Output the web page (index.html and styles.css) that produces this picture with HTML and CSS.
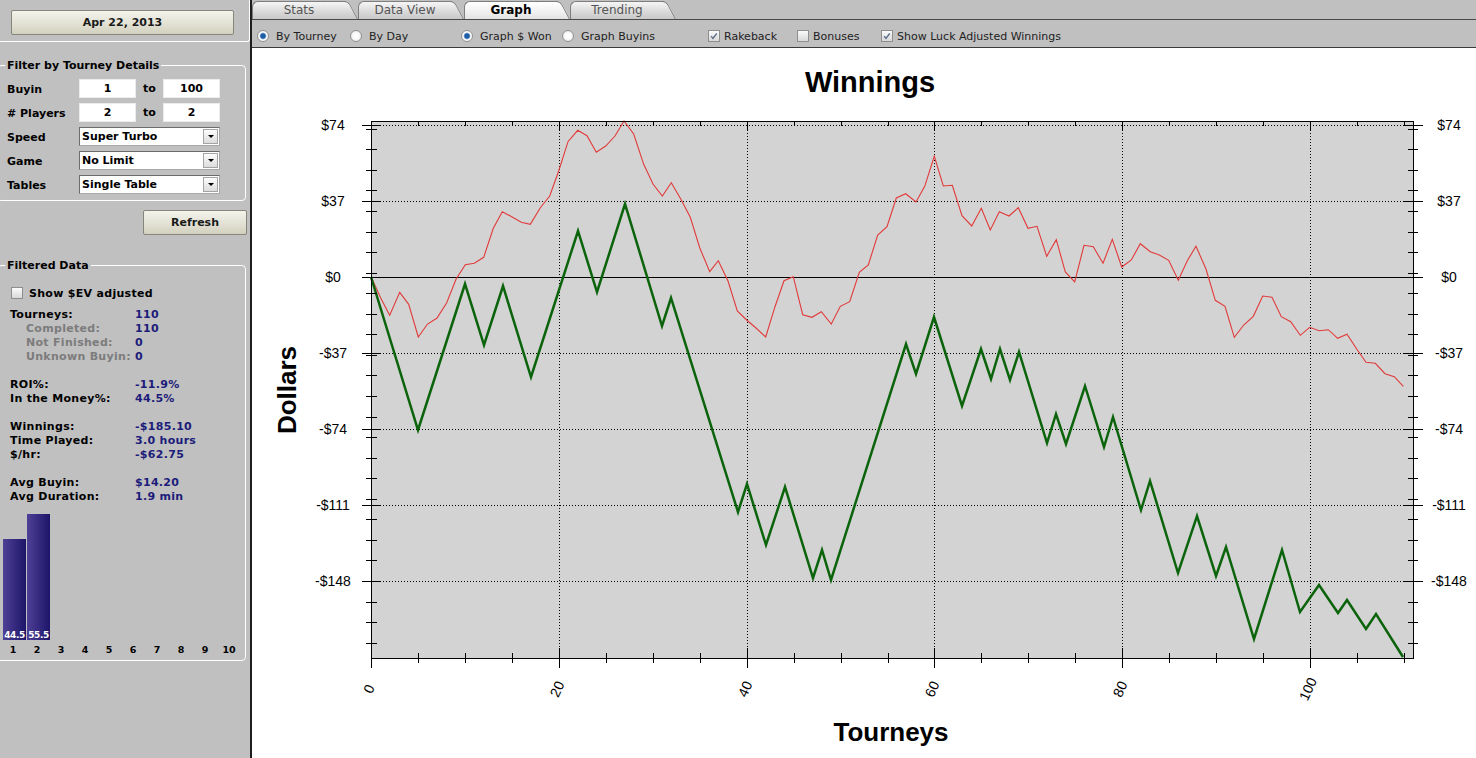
FILE: index.html
```html
<!DOCTYPE html>
<html lang="en">
<head>
  <meta charset="UTF-8" />
  <title>Tourney Graph</title>
  <link rel="stylesheet" href="styles.css">
</head>
<body>
  <aside class="sidebar">
    <div class="date-box">
      <button class="btn date-btn">Apr 22, 2013</button>
    </div>

    <fieldset class="group filter">
      <legend>Filter by Tourney Details</legend>
      <div class="row">
        <label>Buyin</label>
        <input class="num" type="text" value="1" readonly><span class="to">to</span><input class="num" type="text" value="100" readonly>
      </div>
      <div class="row">
        <label># Players</label>
        <input class="num" type="text" value="2" readonly><span class="to">to</span><input class="num" type="text" value="2" readonly>
      </div>
      <div class="row">
        <label>Speed</label>
        <div class="select">Super Turbo<span class="drop"></span></div>
      </div>
      <div class="row">
        <label>Game</label>
        <div class="select">No Limit<span class="drop"></span></div>
      </div>
      <div class="row">
        <label>Tables</label>
        <div class="select">Single Table<span class="drop"></span></div>
      </div>
    </fieldset>

    <button class="btn refresh">Refresh</button>

    <fieldset class="group data">
      <legend>Filtered Data</legend>
      <div class="ev"><span class="box"></span>Show $EV adjusted</div>
      <div class="stats">
        <span>Tourneys:</span><span class="val">110</span>
        <span class="sub">Completed:</span><span class="val">110</span>
        <span class="sub">Not Finished:</span><span class="val">0</span>
        <span class="sub">Unknown Buyin:</span><span class="val">0</span>
        <span class="gap"></span>
        <span>ROI%:</span><span class="val">-11.9%</span>
        <span>In the Money%:</span><span class="val">44.5%</span>
        <span class="gap"></span>
        <span>Winnings:</span><span class="val">-$185.10</span>
        <span>Time Played:</span><span class="val">3.0 hours</span>
        <span>$/hr:</span><span class="val">-$62.75</span>
        <span class="gap"></span>
        <span>Avg Buyin:</span><span class="val">$14.20</span>
        <span>Avg Duration:</span><span class="val">1.9 min</span>
      </div>
      <div class="bars">
        <div class="bar" style="height:101px"><span>44.5</span></div>
        <div class="bar" style="height:126px"><span>55.5</span></div>
      </div>
      <div class="bar-axis">
        <span>1</span><span>2</span><span>3</span><span>4</span><span>5</span>
        <span>6</span><span>7</span><span>8</span><span>9</span><span>10</span>
      </div>
    </fieldset>
  </aside>

  <main class="content">
    <nav class="tabs">
      <div class="tab"><span>Stats</span></div>
      <div class="tab"><span>Data View</span></div>
      <div class="tab active"><span>Graph</span></div>
      <div class="tab"><span>Trending</span></div>
    </nav>

    <div class="toolbar">
      <label class="opt o1"><span class="radio on"></span>By Tourney</label>
      <label class="opt o2"><span class="radio"></span>By Day</label>
      <label class="opt o3"><span class="radio on"></span>Graph $ Won</label>
      <label class="opt o4"><span class="radio"></span>Graph Buyins</label>
      <label class="opt c1"><span class="box"><svg viewBox="0 0 12 12"><path d="M2.5 6.2l2.2 2.6 4.6-5.8"/></svg></span>Rakeback</label>
      <label class="opt c2"><span class="box"></span>Bonuses</label>
      <label class="opt"><span class="box"><svg viewBox="0 0 12 12"><path d="M2.5 6.2l2.2 2.6 4.6-5.8"/></svg></span>Show Luck Adjusted Winnings</label>
    </div>

    <div class="chart">
      <svg width="1224" height="710" viewBox="252 48 1224 710">
        <text class="title" x="870" y="92">Winnings</text>
        <text class="axis-title" transform="translate(296 390) rotate(-90)">Dollars</text>
        <text class="axis-title" x="891" y="741">Tourneys</text>

        <rect class="plot" x="371.5" y="121.5" width="1042" height="537"/>

        <!-- grid -->
        <path class="grid" d="M371 125.5H1413M371 201.5H1413M371 353.5H1413M371 429.5H1413M371 505.5H1413M371 581.5H1413"/>
        <path class="grid" d="M559.5 121V658M747.5 121V658M934.5 121V658M1122.5 121V658M1310.5 121V658"/>
        <path class="axis" d="M362 277.5H1423"/>

        <!-- luck adjusted -->
        <polyline class="luck" points="371.3,277.3 380.7,298 389.7,315.3 399.7,292.3 408.7,304.3 418.3,337 427.3,324.3 437,318 446.7,302.7 456,279.3 465.3,264.7 474.3,263.3 483.7,257.3 493.3,228.3 502.3,211.7 511.7,216.7 521.3,222.3 530.3,224.3 540.3,207.7 549.7,196 558.7,171 568,141.7 577.7,130.3 587,135.7 596.3,152.3 605.7,146 615,136 624,121 633.7,134 643.7,164.3 653,184 662.3,196 671.3,182.7 681.3,200 690.3,217.3 699.7,247.7 709.7,271.7 718.3,260.7 728,281 737.3,311 746.7,320 756,328 765.7,337 775,306.7 784,280.7 793.3,276.7 802.7,314.7 812,317.3 821.3,311.7 831.3,324 840.3,306.3 849.7,301.7 859.3,272.3 868.3,265 877.7,235 887,226.7 896.3,198 905.7,193.7 916,202 924.7,186.3 934.3,156 943.3,186 952.3,185.3 962,215.7 971.7,226 981.3,208.3 990.3,230 999.3,211.7 1009,216 1018.3,207.7 1028,228.3 1037,226.3 1046.7,256.3 1056.3,239.7 1065.3,272 1074.7,282 1084,245.3 1093.3,246.7 1103,263.3 1112.3,239.3 1121.7,267 1131.3,260 1140.3,243.7 1150.3,251.7 1159.3,255 1168.7,260.3 1178.3,280.3 1187.3,260.7 1196,246.3 1206,269 1215.3,300.3 1225,306.3 1234.3,337.3 1243.7,325 1253.3,316.3 1262.7,296 1272,297.3 1281.3,316.7 1290.7,321.7 1300.3,335.3 1309.7,327.3 1319,330.7 1328.3,329.7 1337.7,338.3 1347,334.3 1356.7,349 1366,362.3 1375.3,363.3 1385,373.7 1394.3,376.7 1403.3,386.3"/>

        <!-- actual winnings -->
        <polyline class="won" points="371,277 418,430 465,284 484,345 503,286 531,377 578,231 597,292 625,204 662,326 671,298 738,512 747,484 766,545 785,487 813,578 822,550 831,580 906,344 916,374 934,317 962,406 981,349 991,379 1000,349 1010,380 1019,352 1047,443 1056,414 1066,444 1085,386 1104,447 1113,417 1141,510 1150,481 1178,573 1197,516 1216,576 1226,547 1254,639 1282,550 1300,612 1319,585 1338,613 1347,600 1366,629 1376,614 1403,657"/>

        <rect class="frame" x="371.5" y="121.5" width="1042" height="537"/>

        <!-- ticks -->
        <path class="axis" d="M362 125.5H381M362 201.5H381M362 353.5H381M362 429.5H381M362 505.5H381M362 581.5H381
          M1404 125.5H1423M1404 201.5H1423M1404 353.5H1423M1404 429.5H1423M1404 505.5H1423M1404 581.5H1423"/>
        <path class="axis" d="M366 129.5H377M366 149.5H377M366 170.5H377M366 190.5H377M366 211.5H377M366 232.5H377M366 252.5H377M366 273.5H377M366 293.5H377M366 314.5H377M366 334.5H377M366 355.5H377M366 375.5H377M366 396.5H377M366 417.5H377M366 437.5H377M366 458.5H377M366 478.5H377M366 499.5H377M366 519.5H377M366 540.5H377M366 560.5H377M366 602.5H377M366 622.5H377M366 643.5H377
          M1408 129.5H1418M1408 149.5H1418M1408 170.5H1418M1408 190.5H1418M1408 211.5H1418M1408 232.5H1418M1408 252.5H1418M1408 273.5H1418M1408 293.5H1418M1408 314.5H1418M1408 334.5H1418M1408 355.5H1418M1408 375.5H1418M1408 396.5H1418M1408 417.5H1418M1408 437.5H1418M1408 458.5H1418M1408 478.5H1418M1408 499.5H1418M1408 519.5H1418M1408 540.5H1418M1408 560.5H1418M1408 602.5H1418M1408 622.5H1418M1408 643.5H1418"/>
        <path class="axis" d="M371.5 658V668M418.5 653V663M465.5 653V663M512.5 653V663M559.5 648V668M606.5 653V663M653.5 653V663M700.5 653V663M747.5 648V668M794.5 653V663M841.5 653V663M888.5 653V663M934.5 648V668M981.5 653V663M1028.5 653V663M1075.5 653V663M1122.5 648V668M1169.5 653V663M1216.5 653V663M1263.5 653V663M1310.5 648V668M1357.5 653V663M1404.5 653V663
          M418.5 121V126M465.5 121V126M512.5 121V126M559.5 121V131M606.5 121V126M653.5 121V126M700.5 121V126M747.5 121V131M794.5 121V126M841.5 121V126M888.5 121V126M934.5 121V131M981.5 121V126M1028.5 121V126M1075.5 121V126M1122.5 121V131M1169.5 121V126M1216.5 121V126M1263.5 121V126M1310.5 121V131M1357.5 121V126M1404.5 121V126"/>

        <!-- labels -->
        <g class="tick-label">
          <text x="333" y="130">$74</text>
          <text x="333" y="206">$37</text>
          <text x="333" y="282">$0</text>
          <text x="333" y="358">-$37</text>
          <text x="333" y="434">-$74</text>
          <text x="333" y="510">-$111</text>
          <text x="333" y="586">-$148</text>
          <text x="1449" y="130">$74</text>
          <text x="1449" y="206">$37</text>
          <text x="1449" y="282">$0</text>
          <text x="1449" y="358">-$37</text>
          <text x="1449" y="434">-$74</text>
          <text x="1449" y="510">-$111</text>
          <text x="1449" y="586">-$148</text>
          <text transform="translate(369 689) rotate(-65)" dy=".35em">0</text>
          <text transform="translate(557 689) rotate(-65)" dy=".35em">20</text>
          <text transform="translate(745 689) rotate(-65)" dy=".35em">40</text>
          <text transform="translate(932 689) rotate(-65)" dy=".35em">60</text>
          <text transform="translate(1120 689) rotate(-65)" dy=".35em">80</text>
          <text transform="translate(1308 689) rotate(-65)" dy=".35em">100</text>
        </g>
      </svg>
    </div>
  </main>
</body>
</html>
```

FILE: styles.css
```css
body {
  margin: 0;
  height: 100vh;
  display: flex;
  overflow: hidden;
  font-family: "DejaVu Sans", Verdana, sans-serif;
  font-size: 11px;
  background: #c0c0c0;
  color: #000;
}

/* left panel */
.sidebar {
  width: 250px;
  flex: none;
  font-weight: bold;
}
.date-box {
  box-sizing: border-box;
  width: 250px;
  height: 42px;
  padding: 10px 0 0 11px;
  border-right: 1px solid #fff;
  border-bottom: 1px solid #fff;
  border-bottom-right-radius: 3px;
}
.btn {
  display: block;
  height: 25px;
  padding: 0;
  font: bold 11px "DejaVu Sans", Verdana, sans-serif;
  color: #1a1a1a;
  background: linear-gradient(#f4f3ec, #e4e3d6 50%, #d2d1bf);
  border: 1px solid #86867a;
  border-radius: 2px;
}
.date-btn {
  width: 223px;
}
.refresh {
  width: 104px;
  margin: 9px 0 0 143px;
}
.group {
  min-width: 0;
  margin: 17px 4px 0 -3px;
  padding: 7px 0 6px 9px;
  border: 1px solid #fff;
  border-radius: 4px;
}
.group legend {
  padding: 0 2px;
  margin-left: -2px;
  line-height: 13px;
}
.data {
  margin-top: 24px;
  padding: 14px 0 4px 9px;
}
.row {
  display: flex;
  align-items: center;
  height: 19px;
}
.row + .row {
  margin-top: 5px;
}
.row label {
  width: 72px;
  flex: none;
  padding-top: 1px;
}
.num {
  box-sizing: border-box;
  width: 57px;
  height: 19px;
  padding: 0;
  border: 1px solid #ececec;
  background: #fff;
  text-align: center;
  font: bold 11px "DejaVu Sans", Verdana, sans-serif;
  color: #000;
}
.to {
  width: 27px;
  text-align: center;
}
.select {
  box-sizing: border-box;
  width: 141px;
  height: 19px;
  padding: 0 1px 0 2px;
  display: flex;
  align-items: center;
  justify-content: space-between;
  border: 1px solid #6c6c6c;
  border-right-color: #a8a8a8;
  border-bottom-color: #a8a8a8;
  background: #fff;
}
.drop {
  box-sizing: border-box;
  width: 15px;
  height: 15px;
  display: flex;
  align-items: center;
  justify-content: center;
  border: 1px solid #a4a4a4;
  background: linear-gradient(#fdfdfd, #dcdcdc);
}
.drop::after {
  content: "";
  border-left: 3px solid transparent;
  border-right: 3px solid transparent;
  border-top: 3px solid #000;
}

.ev {
  display: flex;
  align-items: center;
  height: 14px;
  padding-left: 4px;
  letter-spacing: .3px;
}
.ev .box {
  margin-right: 6px;
}
.stats {
  display: grid;
  grid-template-columns: 125px auto;
  line-height: 14px;
  margin-top: 8px;
  padding-left: 3px;
  letter-spacing: .3px;
}
.stats .gap {
  grid-column: 1 / -1;
  height: 14px;
}
.stats .sub {
  color: #7c7c7c;
  padding-left: 16px;
}
.stats .val {
  color: #1c1c7a;
}
.bars {
  display: flex;
  align-items: flex-end;
  gap: 1px;
  height: 136px;
  margin-left: -4px;
}
.bar {
  width: 23px;
  display: flex;
  align-items: flex-end;
  justify-content: center;
  background: linear-gradient(90deg, #4e4096, #1d1569);
  color: #fff;
  font-size: 9px;
  line-height: 10px;
  letter-spacing: -.4px;
}
.bar-axis {
  display: flex;
  margin: 4px 0 0 -6px;
  font-size: 9.5px;
  line-height: 12px;
}
.bar-axis span {
  width: 24px;
  text-align: center;
}

/* right panel */
.content {
  flex: 1;
  display: flex;
  flex-direction: column;
  border-left: 2px solid #1e1e1e;
  overflow: hidden;
}
.tabs {
  height: 19px;
  display: flex;
  align-items: flex-end;
  border-bottom: 1px solid #4a4a4a;
}
.tab {
  position: relative;
  isolation: isolate;
  width: 106px;
  height: 18px;
  flex: none;
  font-size: 12px;
  line-height: 18px;
  color: #555;
}
.tab::before,
.tab::after {
  content: "";
  position: absolute;
  z-index: -1;
  top: 0;
  bottom: 0;
  background: linear-gradient(#f6f6f6, #dadada 55%, #c8c8c8);
  border-top: 1px solid #7e7e7e;
}
.tab::before {
  left: 0;
  right: 12px;
  border-left: 1px solid #7e7e7e;
  border-top-left-radius: 6px;
}
.tab::after {
  right: 0;
  width: 24px;
  border-right: 1px solid #7e7e7e;
  border-top-right-radius: 5px;
  transform: skewX(28deg);
  transform-origin: bottom right;
}
.tab.active {
  font-weight: bold;
  color: #000;
}
.tab.active::before,
.tab.active::after {
  background: linear-gradient(#ffffff, #f0f0f0 60%, #e2e2e2);
}
.tab span {
  display: block;
  width: 94px;
  text-align: center;
}

.toolbar {
  box-sizing: border-box;
  height: 27px;
  padding: 5px 0 0 5px;
  display: flex;
  align-items: center;
  color: #222;
}
.opt {
  display: flex;
  align-items: center;
  flex: none;
}
.o1 { width: 93px; }
.o2 { width: 111px; }
.o3 { width: 101px; }
.o4 { width: 146px; }
.c1 { width: 89px; }
.c2 { width: 84px; }
.radio {
  box-sizing: border-box;
  width: 12px;
  height: 12px;
  margin-right: 7px;
  border: 1px solid #929292;
  border-radius: 50%;
  background: radial-gradient(circle, #ffffff 30%, #dedede);
}
.radio.on {
  background: radial-gradient(circle, #1d5da6 0 2.2px, #8fb0d8 3px, #ffffff 3.8px, #e4e4e4);
}
.box {
  box-sizing: border-box;
  width: 12px;
  height: 12px;
  margin-right: 4px;
  border: 1px solid #8e8e8e;
  background: linear-gradient(#fbfbfb, #d8d8d8);
  display: flex;
}
.box svg {
  width: 10px;
  height: 10px;
}
.box path {
  fill: none;
  stroke: #5a6c8a;
  stroke-width: 1.6;
}

.chart {
  flex: 1;
  background: #fff;
  border-top: 1px solid #3a3a3a;
}
.chart svg {
  display: block;
  font-family: "Liberation Sans", Arial, sans-serif;
}
.title {
  font-size: 29px;
  font-weight: bold;
  text-anchor: middle;
}
.axis-title {
  font-size: 26px;
  font-weight: bold;
  text-anchor: middle;
}
.plot {
  fill: #d3d3d3;
}
.frame {
  fill: none;
  stroke: #000;
}
.grid {
  stroke: #000;
  stroke-dasharray: 1 2;
}
.axis {
  stroke: #000;
  fill: none;
}
.luck {
  fill: none;
  stroke: #e23a3a;
  stroke-width: 1.1;
}
.won {
  fill: none;
  stroke: #0b640b;
  stroke-width: 2.5;
  stroke-linejoin: miter;
}
.tick-label text {
  font-size: 14px;
  text-anchor: middle;
}
```
